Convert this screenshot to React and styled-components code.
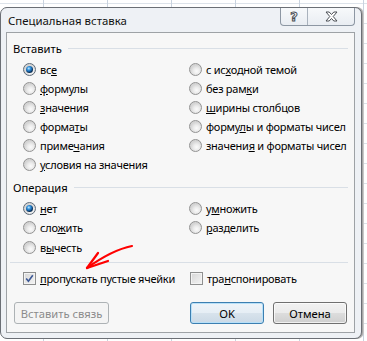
import React from "react";
import styled, { createGlobalStyle, css } from "styled-components";

const Global = createGlobalStyle`
  html, body { margin: 0; padding: 0; }
  body {
    width: 367px; height: 341px; overflow: hidden; background: #fff;
    font-family: "Noto Sans", "DejaVu Sans", sans-serif;
  }
`;

const Desktop = styled.div`
  position: relative;
  width: 367px;
  height: 341px;
  box-sizing: border-box;
  padding-top: 7px;
  overflow: hidden;
  background-color: #fff;
  background-image:
    linear-gradient(to right, #c9d3df 1px, transparent 1px),
    linear-gradient(to bottom, #dde3ea 1px, transparent 1px);
  background-size: 64px 20px, 20px 20px;
  background-position: 43px 0, 0 3px;
`;

const Window = styled.div`
  width: 362px;
  height: 332px;
  box-sizing: border-box;
  border: 1px solid #6b6f75;
  border-radius: 7px;
  background: #eef1f5;
  box-shadow: 1px 0 0 #a6a6a6, 2px 0 0 #c8c8c8;
  display: flex;
  flex-direction: column;
`;

const TitleBar = styled.div`
  height: 25px;
  display: flex;
  align-items: flex-start;
  padding-left: 7px;
  padding-right: 6px;
`;

const Title = styled.div`
  flex: 1;
  align-self: center;
  font-size: 11.4px;
  color: #111;
  padding-top: 1px;
`;

const CaptionGroup = styled.div`
  display: flex;
  height: 17px;
  border: 1px solid #8d97a3;
  border-top: none;
  border-radius: 0 0 4px 4px;
  background: linear-gradient(#f7f9fb, #e9edf2);
  overflow: hidden;
`;

const CaptionButton = styled.div`
  width: ${p => p.$w}px;
  display: flex;
  align-items: center;
  justify-content: center;
  & + & { border-left: 1px solid #a9b2bd; }
`;

const HelpGlyph = styled.span`
  font-family: "DejaVu Sans", sans-serif;
  font-weight: bold;
  font-size: 13px;
  line-height: 1;
  color: #fff;
  -webkit-text-stroke: 1px #4b4f55;
`;

const Panel = styled.div`
  flex: 1;
  margin: 0 6px 5px 5px;
  border: 1px solid #9ea2a6;
  background: #f7f7f7;
  padding: 7px 6px 8px 6px;
  display: flex;
  flex-direction: column;
`;

const Legend = styled.div`
  height: 16px;
  display: flex;
  align-items: center;
  font-size: 11.2px;
  color: #000;
  margin-top: ${p => p.$mt || 0}px;
  &::after {
    content: "";
    flex: 1;
    height: 1px;
    margin-left: 6px;
    background: #d9dfe6;
  }
`;

const OptionGrid = styled.div`
  display: grid;
  grid-template-columns: 166px 1fr;
  grid-auto-flow: column;
  grid-template-rows: repeat(${p => p.$rows}, ${p => p.$rh}px);
  padding-left: 10px;
  margin-top: ${p => p.$mt}px;
`;

const Option = styled.label`
  display: flex;
  align-items: center;
  font-size: 11px;
  letter-spacing: -0.25px;
  color: #000;
  white-space: nowrap;
`;

const RadioDot = styled.span`
  position: relative;
  flex: none;
  width: 13px;
  height: 13px;
  box-sizing: border-box;
  border-radius: 50%;
  border: 1px solid #939393;
  margin-right: 4px;
  background: radial-gradient(circle at 60% 65%, #fbfbfb 0, #ececec 3px, #d4d4d4 6px);
  ${p => p.$checked && css`
    border-color: #5d6a78;
    &::after {
      content: "";
      position: absolute;
      left: 2px; top: 2px;
      width: 7px; height: 7px;
      border-radius: 50%;
      background: radial-gradient(circle at 40% 35%, #c9ecff 0, #3a98e0 1.6px, #125a9c 3.2px, #0b2f55 4px);
    }
  `}
`;

const Separator = styled.div`
  height: 1px;
  background: #d9dfe6;
  margin: 5px 0 0 -3px;
`;

const CheckRow = styled.div`
  display: grid;
  grid-template-columns: 167px 1fr;
  height: 16px;
  margin-top: 7px;
  padding-left: 10px;
`;

const Box = styled.span`
  flex: none;
  width: 13px;
  height: 13px;
  box-sizing: border-box;
  border: 1px solid #8e8f8f;
  margin-right: 4px;
  background: linear-gradient(135deg, #d6d6d6, #f4f4f4);
  box-shadow: inset 0 0 0 1px #f3f3f3;
  display: flex;
  align-items: center;
  justify-content: center;
`;

const Key = styled.span`
  text-decoration: underline;
  text-underline-offset: 1px;
`;

const ButtonRow = styled.div`
  display: flex;
  margin-top: 16px;
  padding-left: 1px;
`;

const Button = styled.div`
  width: ${p => p.$w}px;
  height: 22px;
  box-sizing: border-box;
  border-radius: 3px;
  border: 1px solid #707070;
  background: linear-gradient(#f2f2f2 0%, #ebebeb 49%, #dddddd 50%, #cfcfcf 100%);
  box-shadow: inset 0 0 0 1px rgba(255,255,255,0.7);
  display: flex;
  align-items: center;
  justify-content: center;
  font-size: 11.2px;
  color: #000;
  margin-left: ${p => p.$ml || 0}px;
  ${p => p.$default && css`
    border-color: #3c7fb1;
    background: linear-gradient(#eef4f9 0%, #e6eef5 49%, #d8e3ec 50%, #cbd9e6 100%);
    box-shadow: inset 0 0 0 1px #b8e0f8;
  `}
  ${p => p.$disabled && css`
    border-color: #adb2b5;
    background: #f4f4f4;
    box-shadow: none;
    color: #8b8b8b;
  `}
`;

const Arrow = styled.svg`
  position: absolute;
  left: 0;
  top: 0;
  pointer-events: none;
`;

const Radio = ({ checked, children }) => (
  <Option>
    <RadioDot $checked={checked} />
    <span>{children}</span>
  </Option>
);

const Check = ({ checked, children }) => (
  <Option>
    <Box>
      {checked && (
        <svg width="9" height="9" viewBox="0 0 9 9">
          <path d="M1.2 4.6 L3.4 7.2 L7.8 1.2" fill="none" stroke="#3b5795" strokeWidth="1.6" />
        </svg>
      )}
    </Box>
    <span>{children}</span>
  </Option>
);

export default function App() {
  return (
    <>
      <Global />
      <Desktop>
        <Window>
          <TitleBar>
            <Title>Специальная вставка</Title>
            <CaptionGroup>
              <CaptionButton $w={26}>
                <HelpGlyph>?</HelpGlyph>
              </CaptionButton>
              <CaptionButton $w={46}>
                <svg width="13" height="11" viewBox="0 0 13 11">
                  <path
                    d="M1 1 H4.2 L6.5 3.5 L8.8 1 H12 L8.2 5.5 L12 10 H8.8 L6.5 7.5 L4.2 10 H1 L4.8 5.5 Z"
                    fill="#fff"
                    stroke="#4b4f55"
                    strokeWidth="1"
                    strokeLinejoin="round"
                  />
                </svg>
              </CaptionButton>
            </CaptionGroup>
          </TitleBar>
          <Panel>
            <Legend>Вставить</Legend>
            <OptionGrid $rows={6} $rh={19} $mt={4}>
              <Radio checked>вс<Key>е</Key></Radio>
              <Radio><Key>ф</Key>ормулы</Radio>
              <Radio><Key>з</Key>начения</Radio>
              <Radio>форма<Key>т</Key>ы</Radio>
              <Radio>приме<Key>ч</Key>ания</Radio>
              <Radio><Key>у</Key>словия на значения</Radio>
              <Radio>с ис<Key>х</Key>одной темой</Radio>
              <Radio>без рам<Key>к</Key>и</Radio>
              <Radio><Key>ш</Key>ирины столбцов</Radio>
              <Radio>форму<Key>л</Key>ы и форматы чисел</Radio>
              <Radio>значени<Key>я</Key> и форматы чисел</Radio>
            </OptionGrid>
            <Legend $mt={5}>Операция</Legend>
            <OptionGrid $rows={3} $rh={19.5} $mt={3.5}>
              <Radio checked><Key>н</Key>ет</Radio>
              <Radio>сло<Key>ж</Key>ить</Radio>
              <Radio>в<Key>ы</Key>честь</Radio>
              <Radio>у<Key>м</Key>ножить</Radio>
              <Radio><Key>р</Key>азделить</Radio>
            </OptionGrid>
            <Separator />
            <CheckRow>
              <Check checked><Key>п</Key>ропускать пустые ячейки</Check>
              <Check>тра<Key>н</Key>спонировать</Check>
            </CheckRow>
            <ButtonRow>
              <Button $w={95} $disabled>Вставить связь</Button>
              <Button $w={74} $ml={81} $default>OK</Button>
              <Button $w={74} $ml={9}>Отмена</Button>
            </ButtonRow>
          </Panel>
        </Window>
        <Arrow width="367" height="341" viewBox="0 0 367 341">
          <path d="M132 246 Q112 250 87 268" fill="none" stroke="#ff0000" strokeWidth="2.2" strokeLinecap="round" />
          <path d="M98 253 L87 268 L108 261" fill="none" stroke="#ff0000" strokeWidth="2.2" strokeLinecap="round" strokeLinejoin="round" />
        </Arrow>
      </Desktop>
    </>
  );
}
